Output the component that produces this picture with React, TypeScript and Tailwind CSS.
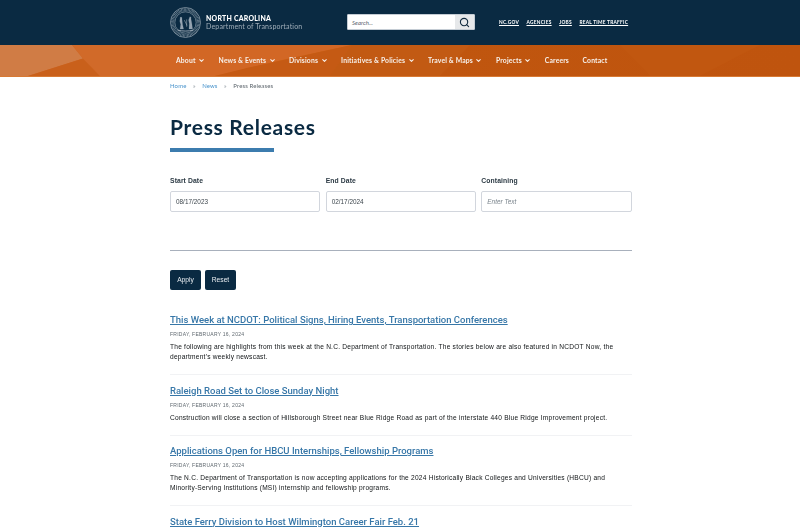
import React from 'react';
import { ChevronDown, Search } from 'lucide-react';

const navItems = [
  { label: 'About', caret: true },
  { label: 'News & Events', caret: true },
  { label: 'Divisions', caret: true },
  { label: 'Initiatives & Policies', caret: true },
  { label: 'Travel & Maps', caret: true },
  { label: 'Projects', caret: true },
  { label: 'Careers', caret: false },
  { label: 'Contact', caret: false },
];

const topLinks = ['NC.GOV', 'AGENCIES', 'JOBS', 'REAL TIME TRAFFIC'];

const releases = [
  {
    title: 'This Week at NCDOT: Political Signs, Hiring Events, Transportation Conferences',
    date: 'FRIDAY, FEBRUARY 16, 2024',
    body: "The following are highlights from this week at the N.C. Department of Transportation. The stories below are also featured in NCDOT Now, the department's weekly newscast.",
  },
  {
    title: 'Raleigh Road Set to Close Sunday Night',
    date: 'FRIDAY, FEBRUARY 16, 2024',
    body: 'Construction will close a section of Hillsborough Street near Blue Ridge Road as part of the interstate 440 Blue Ridge Improvement project.',
  },
  {
    title: 'Applications Open for HBCU Internships, Fellowship Programs',
    date: 'FRIDAY, FEBRUARY 16, 2024',
    body: 'The N.C. Department of Transportation is now accepting applications for the 2024 Historically Black Colleges and Universities (HBCU) and Minority-Serving Institutions (MSI) internship and fellowship programs.',
  },
  {
    title: 'State Ferry Division to Host Wilmington Career Fair Feb. 21',
    date: '',
    body: '',
  },
];

const Seal = () => (
  <svg viewBox="0 0 32 32" className="w-[31px] h-[31px] shrink-0" fill="none" stroke="#b9c4cd">
    <circle cx="16" cy="16" r="15.5" strokeWidth="0.6" />
    <circle cx="16" cy="16" r="13.2" strokeWidth="3.2" strokeDasharray="0.7 0.7" opacity="0.6" />
    <circle cx="16" cy="16" r="11" strokeWidth="0.5" />
    <path d="M10.6 10.6c1.2-.8 2.2.4 1.7 1.6l.7 6 1 4.6h-3.6l.7-4.8-1-3.4z" fill="#b9c4cd" strokeWidth="0.2" opacity="0.8" />
    <path d="M20.4 10.2c1.2-.3 1.7 1 1.2 2l.9 4.6.8 5.9h-3.7l.3-5.6-.7-3.6z" fill="#b9c4cd" strokeWidth="0.2" opacity="0.8" />
    <path d="M8 23.8c4.5 1.4 11.5 1.4 16 0" strokeWidth="0.8" />
    <path d="M14.8 13.6l2.8 5.4M17.2 12.8v7.6" strokeWidth="0.5" />
  </svg>
);

const DateField = ({ label, value, italic }: { label: string; value: string; italic?: boolean }) => (
  <div className="flex-1 min-w-0">
    <div className="text-[6.8px] leading-[9px] font-bold text-[#2c3a44] tracking-[0.1px] mb-[6px]">{label}</div>
    <div className={`h-[21px] bg-white border border-[#d2d6dd] rounded-[2px] flex items-center px-[5px] text-[6.4px] ${italic ? 'italic text-[#7a848c]' : 'text-[#3d464d]'}`}>
      {value}
    </div>
  </div>
);

export default function App() {
  return (
    <div className="w-[800px] h-[531px] overflow-hidden bg-white font-['Lato','Liberation_Sans',sans-serif]">
      {/* Top bar */}
      <div className="h-[45px] bg-[#0a2a42] pl-[170px] flex items-center">
        <div className="flex items-center gap-[5px] w-[177px] -mt-[1px] [will-change:transform]">
          <Seal />
          <div>
            <div className="text-[6.9px] leading-[8px] font-black text-white tracking-[0.25px]">NORTH CAROLINA</div>
            <div className="text-[7.05px] leading-[9px] text-[#9fadb8] tracking-[0.15px]">Department of Transportation</div>
          </div>
        </div>
        <div className="w-[128px] h-[16px] flex bg-white border border-[#c4ccd4] rounded-[1px] -mt-[1px]">
          <div className="flex-1 pl-[4px] text-[6px] leading-[15px] italic text-[#5a646c]">Search...</div>
          <div className="w-[19px] bg-[#e6e8ea] flex items-center justify-center">
            <Search className="w-[11px] h-[11px] text-[#102a3e]" strokeWidth={2.4} />
          </div>
        </div>
        <div className="flex items-center gap-[7.5px] ml-[24px] -mt-[1px] [will-change:transform]">
          {topLinks.map((l) => (
            <span key={l} className="text-[4.8px] leading-[7px] font-bold text-white underline tracking-[0.25px]">{l}</span>
          ))}
        </div>
      </div>

      {/* Orange nav */}
      <div className="relative h-[32px] bg-[#c0560f] border-b border-[#d87a34]">
        <svg className="absolute inset-0 w-full h-full" viewBox="0 0 800 32" preserveAspectRatio="none">
          <defs>
            <linearGradient id="navFade" x1="0" y1="0" x2="1" y2="0">
              <stop offset="0" stopColor="#d26a28" />
              <stop offset="0.45" stopColor="#c8600f" />
              <stop offset="0.52" stopColor="#c0560f" />
              <stop offset="1" stopColor="#bf540e" />
            </linearGradient>
          </defs>
          <rect width="800" height="32" fill="url(#navFade)" />
          <polygon points="0,0 72,0 83,14 28,32 0,32" fill="#d07c45" />
          <polygon points="83,14 100,32 28,32" fill="#c9601b" />
          <polygon points="72,0 130,0 130,32 100,32 83,14" fill="#d16a29" />
          <polygon points="130,0 352,0 280,16 215,32 130,32" fill="#d26725" />
          <polygon points="250,23 352,0 330,32 215,32" fill="#c55a14" />
          <polygon points="352,0 470,0 440,32 330,32" fill="#c25a13" />
          <polygon points="620,0 760,0 700,32 650,32" fill="#c15710" />
        </svg>
        <div className="relative h-full flex items-center pl-[176px] gap-[13.5px] [will-change:transform]">
          {navItems.map((n) => (
            <span key={n.label} className="flex items-center gap-[2.5px] text-[6.8px] font-bold text-[#f7f0ea] tracking-[0.15px] whitespace-nowrap">
              {n.label}
              {n.caret && <ChevronDown className="w-[7px] h-[7px]" strokeWidth={3.6} />}
            </span>
          ))}
        </div>
      </div>

      {/* Content */}
      <div className="w-[461.5px] ml-[170px] [will-change:transform]">
        <div className="h-[18px] flex items-center gap-[6.5px] text-[6px] tracking-[0.12px] -mt-[1px]">
          <span className="text-[#4a94cc]">Home</span>
          <span className="text-[#8a949c]">»</span>
          <span className="text-[#4a94cc]">News</span>
          <span className="text-[#8a949c]">»</span>
          <span className="text-[#5d666d]">Press Releases</span>
        </div>

        <h1 className="mt-[20px] text-[21px] leading-[26px] font-bold text-[#0a2a42] tracking-[0.7px]">Press Releases</h1>
        <div className="mt-[8px] h-[4px] w-[104px] bg-[#3c7cae]" />

        <div className="mt-[24px] flex gap-[5.5px] font-['Liberation_Sans',sans-serif]">
          <DateField label="Start Date" value="08/17/2023" />
          <DateField label="End Date" value="02/17/2024" />
          <DateField label="Containing" value="Enter Text" italic />
        </div>

        <div className="mt-[38px] h-px bg-[#a8b0bc]" />

        <div className="mt-[19px] flex gap-[4px] font-['Liberation_Sans',sans-serif]">
          <button className="w-[31px] h-[20px] bg-[#0a2a42] rounded-[2px] text-[6.7px] text-[#e8edf1]">Apply</button>
          <button className="w-[31px] h-[20px] bg-[#0a2a42] rounded-[2px] text-[6.7px] text-[#e8edf1]">Reset</button>
        </div>

        <div className="mt-[23px]">
          {releases.map((r) => (
            <div key={r.title} className={r.date ? 'pb-[12px] mb-[8.5px] border-b border-[#f1f2f4]' : ''}>
              <a className="block text-[9.5px] leading-[14px] font-medium text-[#3777a8] underline font-['Roboto',sans-serif]">{r.title}</a>
              {r.date && <div className="mt-[4px] text-[5px] leading-[7px] text-[#5f686f] tracking-[0.25px] font-['Liberation_Sans',sans-serif]">{r.date}</div>}
              {r.body && <p className="mt-[4px] text-[6.6px] leading-[10px] tracking-[0.23px] text-[#0f1315] font-['Liberation_Sans',sans-serif]">{r.body}</p>}
            </div>
          ))}
        </div>
      </div>
    </div>
  );
}
